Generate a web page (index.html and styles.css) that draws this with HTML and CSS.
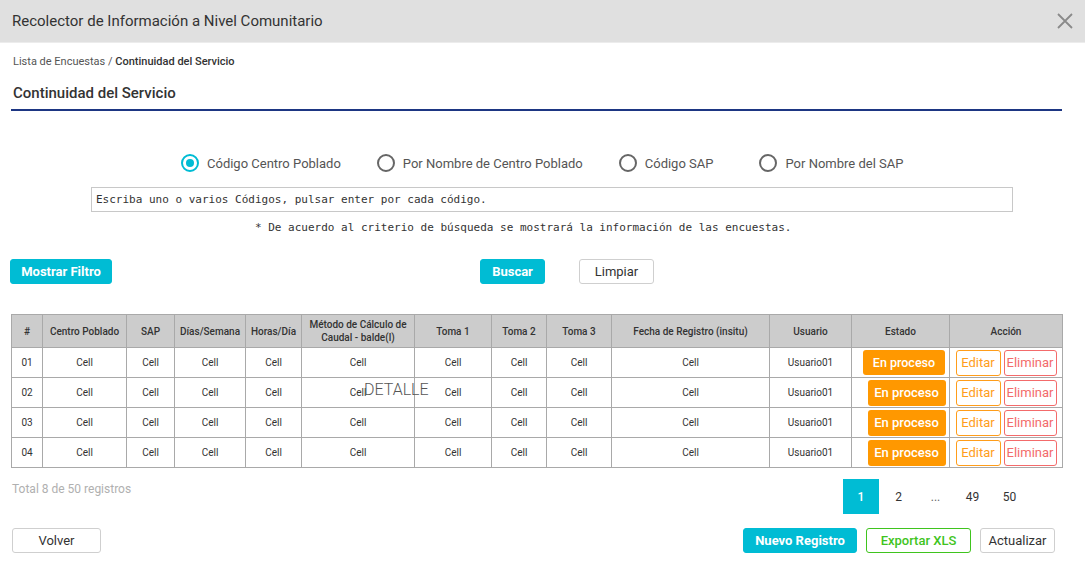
FILE: index.html
```html
<!DOCTYPE html>
<html lang="es">
<head>
<meta charset="utf-8">
<title>Recolector de Información a Nivel Comunitario</title>
<link rel="stylesheet" href="styles.css">
</head>
<body>
<header class="topbar">
  <h1 class="topbar-title">Recolector de Información a Nivel Comunitario</h1>
  <button class="close-btn" aria-label="Cerrar">
    <svg width="16" height="16" viewBox="0 0 16 16"><path d="M1 1 L15 15 M15 1 L1 15" stroke="#8a8a8a" stroke-width="1.8" fill="none"/></svg>
  </button>
</header>

<main class="content">
  <nav class="breadcrumb">Lista de Encuestas / <strong>Continuidad del Servicio</strong></nav>
  <h2 class="page-title">Continuidad del Servicio</h2>

  <div class="radio-row">
    <label class="radio checked"><span class="radio-circle"></span>Código Centro Poblado</label>
    <label class="radio"><span class="radio-circle"></span>Por Nombre de Centro Poblado</label>
    <label class="radio"><span class="radio-circle"></span>Código SAP</label>
    <label class="radio radio-last"><span class="radio-circle"></span>Por Nombre del SAP</label>
  </div>

  <div class="search-wrap">
    <input class="search-input" type="text" placeholder="Escriba uno o varios Códigos, pulsar enter por cada código.">
  </div>
  <p class="note">* De acuerdo al criterio de búsqueda se mostrará la información de las encuestas.</p>

  <div class="action-row">
    <button class="btn btn-primary btn-filter">Mostrar Filtro</button>
    <button class="btn btn-primary btn-search">Buscar</button>
    <button class="btn btn-outline btn-clear">Limpiar</button>
  </div>

  <div class="table-wrap">
    <table class="grid">
      <colgroup>
        <col style="width:31px"><col style="width:84px"><col style="width:48px"><col style="width:71px">
        <col style="width:56px"><col style="width:113px"><col style="width:77px"><col style="width:55px">
        <col style="width:65px"><col style="width:158px"><col style="width:82px"><col style="width:98px">
        <col style="width:113px">
      </colgroup>
      <thead>
        <tr>
          <th>#</th><th>Centro Poblado</th><th>SAP</th><th>Días/Semana</th><th>Horas/Día</th>
          <th>Método de Cálculo de Caudal - balde(l)</th><th>Toma 1</th><th>Toma 2</th><th>Toma 3</th>
          <th>Fecha de Registro (insitu)</th><th>Usuario</th><th>Estado</th><th>Acción</th>
        </tr>
      </thead>
      <tbody>
        <tr>
          <td>01</td><td>Cell</td><td>Cell</td><td>Cell</td><td>Cell</td><td>Cell</td><td>Cell</td><td>Cell</td><td>Cell</td><td>Cell</td><td>Usuario01</td>
          <td class="estado"><span class="badge badge-sm">En proceso</span></td>
          <td class="accion"><span class="mini mini-edit">Editar</span><span class="mini mini-del">Eliminar</span></td>
        </tr>
        <tr>
          <td>02</td><td>Cell</td><td>Cell</td><td>Cell</td><td>Cell</td><td>Cell</td><td>Cell</td><td>Cell</td><td>Cell</td><td>Cell</td><td>Usuario01</td>
          <td class="estado"><span class="badge">En proceso</span></td>
          <td class="accion"><span class="mini mini-edit">Editar</span><span class="mini mini-del">Eliminar</span></td>
        </tr>
        <tr>
          <td>03</td><td>Cell</td><td>Cell</td><td>Cell</td><td>Cell</td><td>Cell</td><td>Cell</td><td>Cell</td><td>Cell</td><td>Cell</td><td>Usuario01</td>
          <td class="estado"><span class="badge">En proceso</span></td>
          <td class="accion"><span class="mini mini-edit">Editar</span><span class="mini mini-del">Eliminar</span></td>
        </tr>
        <tr>
          <td>04</td><td>Cell</td><td>Cell</td><td>Cell</td><td>Cell</td><td>Cell</td><td>Cell</td><td>Cell</td><td>Cell</td><td>Cell</td><td>Usuario01</td>
          <td class="estado"><span class="badge">En proceso</span></td>
          <td class="accion"><span class="mini mini-edit">Editar</span><span class="mini mini-del">Eliminar</span></td>
        </tr>
      </tbody>
    </table>
    <span class="overlay-detalle">DETALLE</span>
  </div>

  <div class="table-footer">
    <span class="total">Total 8 de 50 registros</span>
    <nav class="pager">
      <span class="page active">1</span>
      <span class="page">2</span>
      <span class="page dots">...</span>
      <span class="page">49</span>
      <span class="page">50</span>
    </nav>
  </div>

  <div class="bottom-row">
    <button class="btn btn-outline btn-back">Volver</button>
    <div class="bottom-right">
      <button class="btn btn-primary btn-new">Nuevo Registro</button>
      <button class="btn btn-green">Exportar XLS</button>
      <button class="btn btn-outline btn-refresh">Actualizar</button>
    </div>
  </div>
</main>
</body>
</html>
```

FILE: styles.css
```css
* { box-sizing: border-box; }

body {
  margin: 0;
  font-family: Roboto, "Liberation Sans", Arial, sans-serif;
  color: #333;
  background: #fff;
  width: 1085px;
  height: 566px;
  overflow: hidden;
}

.topbar {
  height: 43px;
  background: #e0e0e0;
  border-bottom: 1px solid #ececec;
  display: flex;
  align-items: center;
  justify-content: space-between;
  padding: 0 12px 0 12px;
}

.topbar-title {
  margin: 0;
  font-size: 15px;
  font-weight: 400;
  color: #333;
}

.close-btn {
  border: 0;
  background: transparent;
  padding: 0;
  width: 16px;
  height: 16px;
  margin-right: 0;
  display: flex;
}

.content {
  padding: 0 23px 0 11px;
}

.breadcrumb {
  margin-top: 12px;
  font-size: 11px;
  line-height: 14px;
  color: #555;
  padding-left: 2px;
}

.breadcrumb strong {
  font-weight: 500;
  color: #333;
}

.page-title {
  margin: 14px 0 0;
  font-size: 15px;
  font-weight: 500;
  line-height: 20px;
  padding: 0 0 6px 2px;
  color: #333;
  border-bottom: 2px solid #1d3683;
}

.radio-row {
  margin-top: 42px;
  display: flex;
  justify-content: flex-start;
  gap: 36px;
  padding-left: 170px;
  height: 20px;
  align-items: center;
}

.radio {
  display: flex;
  align-items: center;
  gap: 8px;
  font-size: 13px;
  color: #555;
}

.radio-last { margin-left: 10px; }

.radio-circle {
  width: 18px;
  height: 18px;
  border: 2px solid #666;
  border-radius: 50%;
  display: inline-block;
  position: relative;
}

.radio.checked .radio-circle {
  border-color: #00bcd4;
}

.radio.checked .radio-circle::after {
  content: "";
  position: absolute;
  left: 3px;
  top: 3px;
  width: 8px;
  height: 8px;
  border-radius: 50%;
  background: #00bcd4;
}

.search-wrap {
  margin-top: 14px;
  padding-left: 80px;
}

.search-input {
  display: block;
  width: 922px;
  height: 25px;
  border: 1px solid #c8c8c8;
  padding: 0 4px;
  font-family: "DejaVu Sans Mono", "Liberation Mono", monospace;
  font-size: 11px;
  color: #333;
  outline: none;
}

.search-input::placeholder {
  color: #333;
  opacity: 1;
}

.note {
  margin: 9px 0 0;
  padding-left: 244px;
  font-family: "DejaVu Sans Mono", "Liberation Mono", monospace;
  font-size: 11px;
  line-height: 14px;
  color: #333;
}

.btn {
  height: 25px;
  border-radius: 3px;
  font-family: Roboto, "Liberation Sans", Arial, sans-serif;
  font-size: 13px;
  padding: 0;
  cursor: pointer;
}

.btn-primary {
  background: #00bcd4;
  border: 1px solid #00bcd4;
  color: #fff;
  font-weight: 700;
}

.btn-outline {
  background: #fff;
  border: 1px solid #cfcfcf;
  color: #333;
}

.btn-green {
  background: #fff;
  border: 1px solid #3fc41e;
  color: #3fc41e;
  font-weight: 500;
  width: 105px;
}

.action-row {
  margin-top: 24px;
  display: flex;
  align-items: center;
}

.btn-filter { width: 102px; margin-left: -1px; }
.btn-search { width: 65px; margin-left: 368px; }
.btn-clear { width: 75px; margin-left: 34px; }

.table-wrap {
  position: relative;
  margin-top: 30px;
  width: 1051px;
}

.grid {
  width: 1051px;
  border-collapse: collapse;
  table-layout: fixed;
  font-size: 10px;
  color: #333;
}

.grid th,
.grid td {
  border: 1px solid #a9a9a9;
  text-align: center;
  padding: 0 2px;
}

.grid th {
  background: #cccccc;
  font-weight: 500;
  height: 33px;
  line-height: 13px;
}

.grid td {
  height: 30px;
  background: #fff;
}

.grid td.estado,
.grid td.accion {
  padding: 0;
}

.badge {
  display: inline-flex;
  align-items: center;
  justify-content: center;
  width: 78px;
  height: 26px;
  background: #ff9800;
  color: #fff;
  border-radius: 3px;
  font-size: 13px;
  font-weight: 500;
  margin-left: 12px;
}

.badge-sm { width: 82px; height: 25px; margin-left: 7px; font-size: 12.5px; }

.accion {
  white-space: nowrap;
}

.mini {
  display: inline-flex;
  align-items: center;
  justify-content: center;
  height: 26px;
  border-radius: 3px;
  font-size: 13px;
  background: #fff;
  vertical-align: middle;
}

.mini-edit {
  width: 45px;
  border: 1px solid #ff9d1a;
  color: #ff9d1a;
}

.mini-del {
  width: 53px;
  border: 1px solid #f36b6b;
  color: #f36b6b;
  margin-left: 3px;
}

.overlay-detalle {
  position: absolute;
  left: 353px;
  top: 68px;
  font-size: 16px;
  line-height: 16px;
  font-weight: 300;
  color: #555;
  pointer-events: none;
}

.table-footer {
  margin-top: 11px;
  display: flex;
  justify-content: space-between;
  align-items: flex-start;
  padding-left: 1px;
}

.total {
  font-size: 12px;
  color: #b0b0b0;
  line-height: 20px;
}

.pager {
  display: flex;
  margin-right: 34px;
}

.page {
  width: 37px;
  height: 35px;
  display: flex;
  align-items: center;
  justify-content: center;
  font-size: 12px;
  color: #333;
}

.page.active {
  width: 36px;
  margin-right: 1px;
  background: #00bcd4;
  color: #fff;
  font-weight: 500;
}

.page.dots { color: #666; }

.bottom-row {
  margin-top: 14px;
  display: flex;
  justify-content: space-between;
  padding-left: 1px;
}

.btn-back { width: 89px; }

.bottom-right {
  display: flex;
  gap: 9px;
  margin-right: 7px;
}

.btn-new { width: 114px; }
.btn-refresh { width: 75px; }
```
